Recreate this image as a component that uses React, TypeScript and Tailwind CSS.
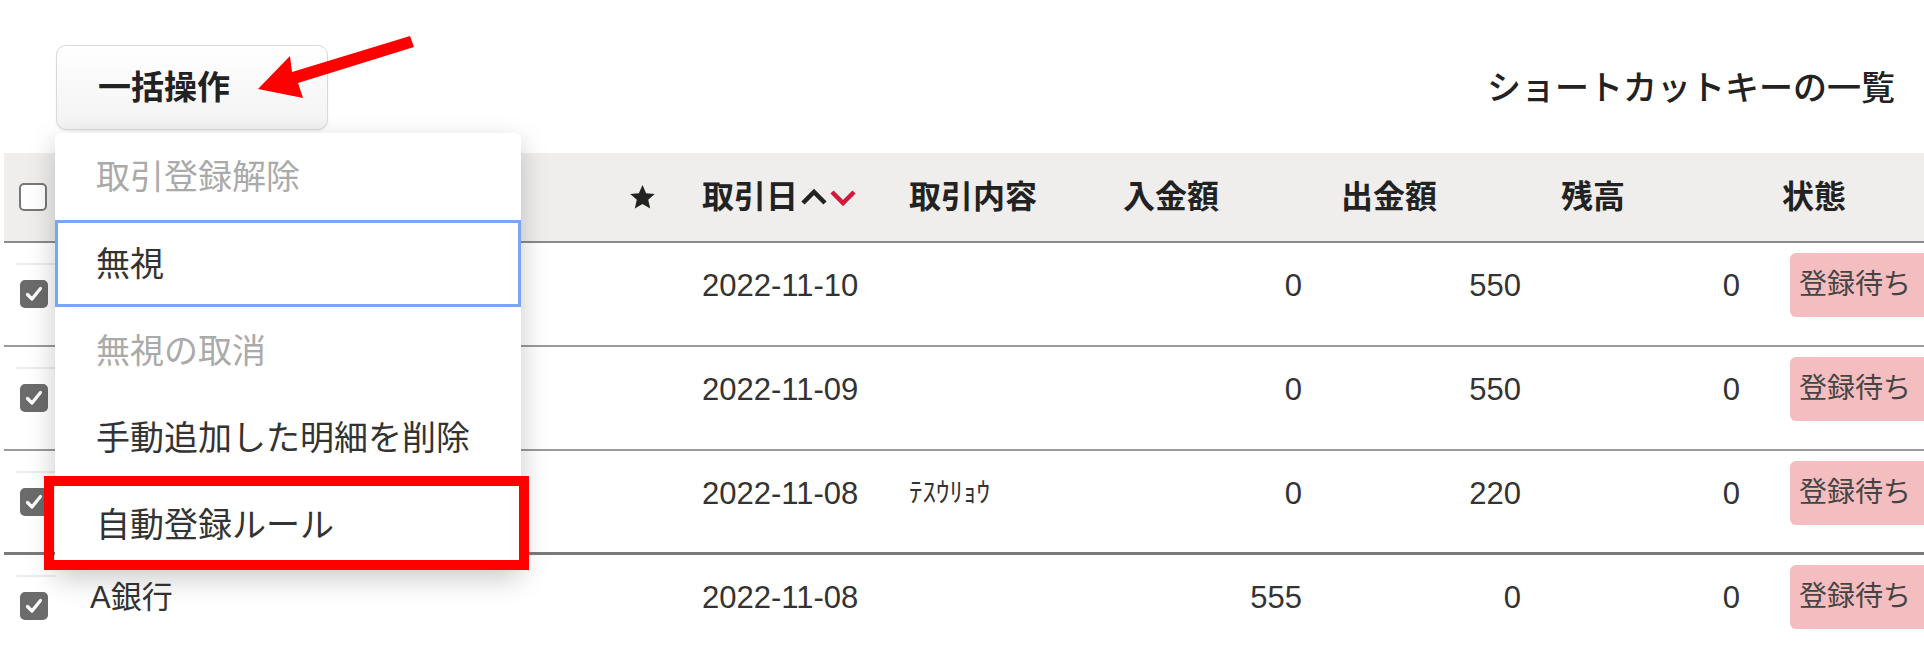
import React from 'react';

const FONT = { fontFamily: '"Liberation Sans", "Noto Sans CJK JP", sans-serif' };

const rows = [
  { name: '', date: '2022-11-10', memo: '', inAmt: '0', outAmt: '550', bal: '0' },
  { name: '', date: '2022-11-09', memo: '', inAmt: '0', outAmt: '550', bal: '0' },
  { name: '', date: '2022-11-08', memo: 'ﾃｽｳﾘｮｳ', inAmt: '0', outAmt: '220', bal: '0' },
  { name: 'A銀行', date: '2022-11-08', memo: '', inAmt: '555', outAmt: '0', bal: '0' },
];

const menuItems = [
  { label: '取引登録解除', disabled: true },
  { label: '無視', focused: true },
  { label: '無視の取消', disabled: true },
  { label: '手動追加した明細を削除' },
  { label: '自動登録ルール' },
];

const Checkbox = ({ checked }: { checked?: boolean }) =>
  checked ? (
    <div className="w-[28px] h-[28px] rounded-[5px] bg-[#6b6b6b] flex items-center justify-center">
      <svg width="20" height="20" viewBox="0 0 20 20">
        <path d="M3.5 10.5 L8 15 L16.5 4.5" fill="none" stroke="#fff" strokeWidth="3.2" strokeLinecap="round" strokeLinejoin="round" />
      </svg>
    </div>
  ) : (
    <div className="w-[28px] h-[28px] rounded-[5px] bg-white border-[2px] border-[#777]" />
  );

const Star = () => (
  <svg width="29" height="28" viewBox="0 0 24 24">
    <path d="M12 1.8l3.1 6.9 7.4.7-5.6 5 1.7 7.4L12 17.9l-6.6 3.9 1.7-7.4-5.6-5 7.4-.7z" fill="#222" />
  </svg>
);

const SortArrows = () => (
  <svg width="58" height="18" viewBox="0 0 58 18" className="ml-[2px]">
    <polyline points="3,15 14,4 25,15" fill="none" stroke="#222" strokeWidth="4.5" strokeLinejoin="miter" />
    <polyline points="32,4 43,15 54,4" fill="none" stroke="#d11a3b" strokeWidth="4.5" strokeLinejoin="miter" />
  </svg>
);

const App = () => {
  return (
    <div className="relative w-[1924px] h-[650px] overflow-hidden bg-white text-[#333]" style={FONT}>
      {/* top bar */}
      <div className="flex items-start justify-between h-[153px]">
        <button className="ml-[56px] mt-[45px] w-[272px] h-[85px] rounded-[10px] border border-[#d9d9d9] bg-gradient-to-b from-white to-[#f3f3f3] shadow-[0_1px_2px_rgba(0,0,0,0.08)] flex items-center pl-[41px]">
          <span className="text-[33px] leading-none font-bold text-[#222]">一括操作</span>
        </button>
        <div className="mt-[71px] mr-[29px] text-[34px] leading-none font-medium text-[#222]">
          ショートカットキーの一覧
        </div>
      </div>

      {/* table */}
      <div className="pl-[4px]">
        <div className="flex items-center h-[90px] bg-[#efeeed] border-b-2 border-[#8a8a8a] text-[32px] leading-none font-bold text-[#222]">
          <div className="w-[86px] pl-[15px]"><Checkbox /></div>
          <div className="w-[530px]" />
          <div className="w-[50px] pl-[8px] flex"><Star /></div>
          <div className="w-[239px] pl-[32px] flex items-center">取引日<SortArrows /></div>
          <div className="w-[191px]">取引内容</div>
          <div className="w-[202px] pl-[23px]">入金額</div>
          <div className="w-[219px] pl-[39px]">出金額</div>
          <div className="w-[219px] pl-[40px]">残高</div>
          <div className="w-[184px] pl-[42px]">状態</div>
        </div>

        {rows.map((r, i) => (
          <div
            key={i}
            className={`flex items-start h-[104px] pt-[10px] text-[31px] leading-none ${
              i === 2 ? 'border-b-[3px] border-[#7a7a7a]' : 'border-b-2 border-[#9a9a9a]'
            }`}
          >
            <div className="w-[86px] pl-[12px] pt-[10px]">
              <div className="w-[40px] border-t-2 border-[#ececec] pt-[15px] pl-[4px]">
                <Checkbox checked />
              </div>
            </div>
            <div className="w-[530px] h-[64px] flex items-center">{r.name}</div>
            <div className="w-[50px]" />
            <div className="w-[239px] h-[64px] pl-[32px] flex items-center">{r.date}</div>
            <div className="w-[191px] h-[64px] flex items-center text-[27px]">{r.memo}</div>
            <div className="w-[202px] h-[64px] flex items-center justify-end">{r.inAmt}</div>
            <div className="w-[219px] h-[64px] flex items-center justify-end">{r.outAmt}</div>
            <div className="w-[219px] h-[64px] flex items-center justify-end">{r.bal}</div>
            <div className="w-[184px] h-[64px] pl-[50px] flex">
              <div className="h-[64px] w-[150px] shrink-0 rounded-[6px] bg-[#f4bdbf] flex items-center pl-[9px] text-[28px] text-[#444]">
                登録待ち
              </div>
            </div>
          </div>
        ))}
      </div>

      {/* dropdown menu */}
      <div className="absolute left-[55px] top-[133px] w-[466px] rounded-[6px] bg-white shadow-[0_10px_28px_rgba(0,0,0,0.22)] text-[34px] leading-none">
        {menuItems.map((m) => (
          <div
            key={m.label}
            className={`h-[87px] flex items-center ${
              m.focused ? 'border-[3px] border-[#78a6f5] pl-[38px]' : 'pl-[41px]'
            } ${m.disabled ? 'text-[#aaaaaa]' : 'text-[#333]'}`}
          >
            {m.label}
          </div>
        ))}
      </div>

      {/* annotation: red highlight box */}
      <div className="absolute left-[44px] top-[476px] w-[485px] h-[94px] border-[10px] border-[#ff0000]" />

      {/* annotation: red arrow */}
      <svg className="absolute left-0 top-0" width="450" height="120" viewBox="0 0 450 120">
        <polygon points="258,89 290,56 292,72 410,36 414,47 298,83 303,98" fill="#ff0000" />
      </svg>
    </div>
  );
};

export default App;
